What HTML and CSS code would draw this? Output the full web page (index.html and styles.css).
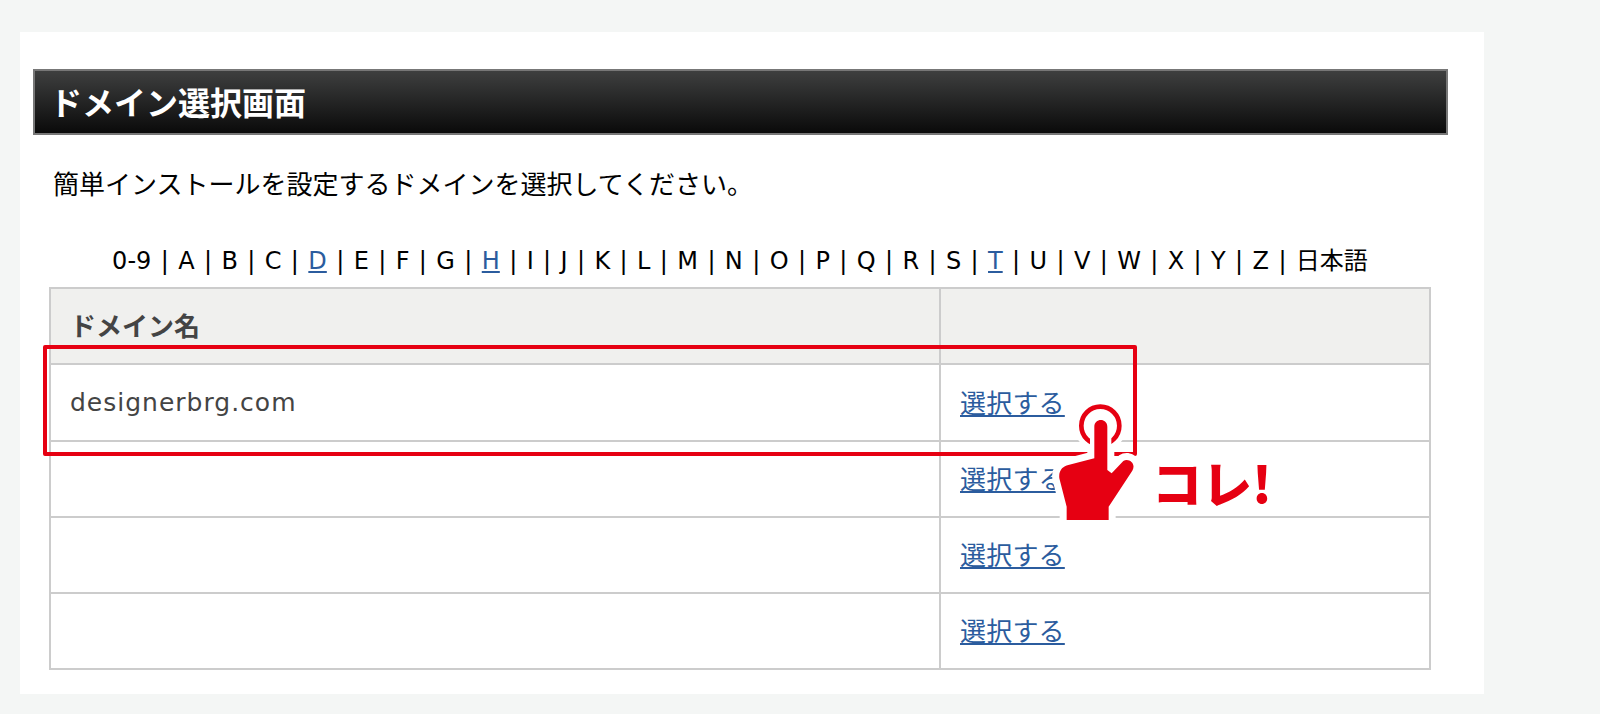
FILE: index.html
```html
<!DOCTYPE html>
<html lang="ja">
<head>
<meta charset="utf-8">
<title>ドメイン選択画面</title>
<link rel="stylesheet" href="styles.css">
</head>
<body>
<main class="panel">
  <h1 class="title">ドメイン選択画面</h1>
  <p class="lead">簡単インストールを設定するドメインを選択してください。</p>
  <div class="content">
    <nav class="index">0-9 | A | B | C | <a href="#">D</a> | E | F | G | <a href="#">H</a> | I | J | K | L | M | N | O | P | Q | R | S | <a href="#">T</a> | U | V | W | X | Y | Z | 日本語</nav>
    <table class="domains">
      <thead>
        <tr><th class="col-name">ドメイン名</th><th class="col-action"></th></tr>
      </thead>
      <tbody>
        <tr><td class="name">designerbrg.com</td><td class="action"><a href="#">選択する</a></td></tr>
        <tr class="short"><td class="name"></td><td class="action"><a href="#">選択する</a></td></tr>
        <tr class="short"><td class="name"></td><td class="action"><a href="#">選択する</a></td></tr>
        <tr class="short"><td class="name"></td><td class="action"><a href="#">選択する</a></td></tr>
      </tbody>
    </table>
  </div>
</main>
<div class="highlight"></div>
<svg class="hand" viewBox="0 0 300 160" width="300" height="160" aria-hidden="true">
  <g transform="scale(0.3333)">
    <circle class="ring-halo" cx="301" cy="137" r="57"/>
    <path class="hand-halo" d="M283 235L283 140C283 113 322 113 322 140L322 270L335 280L370 243C385 232 410 250 397 272L326 380L326 420L200 420L200 380L178 295C175 270 190 258 205 255Z"/>
    <circle class="ring" cx="301" cy="137" r="57"/>
    <path class="finger-halo" d="M302 140L302 280"/>
    <path class="hand-fill" d="M283 235L283 140C283 113 322 113 322 140L322 270L335 280L370 243C385 232 410 250 397 272L326 380L326 420L200 420L200 380L178 295C175 270 190 258 205 255Z"/>
  </g>
</svg>
<div class="callout">コレ!</div>
</body>
</html>
```
FILE: styles.css
```css
html, body { margin: 0; height: 714px; overflow: hidden; }
body {
  background: #f4f6f5;
  padding: 32px 116px 20px 20px;
  box-sizing: border-box;
  font-family: "DejaVu Sans", "Noto Sans CJK JP", sans-serif;
  color: #000;
  position: relative;
}
.panel {
  background: #fff;
  height: 662px;
  padding: 37px 36px 0 13px;
  box-sizing: border-box;
}
.title {
  margin: 0;
  height: 66px;
  box-sizing: border-box;
  border: 2px solid #777;
  background: linear-gradient(#3e3f3f, #0a0a0a);
  color: #fff;
  font-family: "Noto Sans CJK JP", sans-serif;
  font-size: 32px;
  font-weight: 700;
  line-height: 60px;
  padding-left: 15px;
}
.lead {
  margin: 0;
  padding: 32px 0 0 20px;
  font-family: "Noto Sans CJK JP", sans-serif;
  font-size: 26px;
  line-height: 32px;
  height: 32px;
}
.content { padding: 44px 17px 0 16px; }
.index {
  text-align: center;
  font-size: 24px;
  line-height: 36px;
  height: 36px;
  margin-bottom: 8px;
  white-space: nowrap;
  word-spacing: 1.75px;
}
a { color: #2b5c9e; }
.domains {
  width: 1382px;
  table-layout: fixed;
  border-collapse: collapse;
  border: 2px solid #ccc;
  color: #444;
}
.domains th, .domains td {
  border: 2px solid #ccc;
  padding: 0 19px;
  height: 77px;
  text-align: left;
  box-sizing: border-box;
}
.domains .short td { height: 76px; }
.domains th { height: 76px; background: #f0f0ee; font-family: "Noto Sans CJK JP", sans-serif; font-size: 26px; font-weight: 700; padding-bottom: 3px; }
.col-name { width: 890px; }
.domains td { font-family: "Noto Sans CJK JP", sans-serif; font-size: 26px; }
.domains td.action { padding-bottom: 3px; letter-spacing: 0.2px; }
.domains td.name { font-family: "DejaVu Sans", sans-serif; font-size: 25px; letter-spacing: 1px; }
.highlight {
  position: absolute;
  left: 43px;
  top: 345px;
  width: 1094px;
  height: 111px;
  box-sizing: border-box;
  border: 4px solid #e60012;
  border-radius: 2px;
}
.hand { position: absolute; left: 1000px; top: 380px; }
.ring-halo { fill: none; stroke: #fff; stroke-width: 44; }
.hand-halo { fill: #fff; stroke: #fff; stroke-width: 42; stroke-linejoin: round; }
.ring { fill: none; stroke: #e60012; stroke-width: 14; }
.finger-halo { fill: none; stroke: #fff; stroke-width: 64; }
.hand-fill { fill: #e60012; }
.callout {
  position: absolute;
  left: 1152px;
  top: 449px;
  font-family: "Noto Sans CJK JP", sans-serif;
  font-weight: 900;
  font-size: 50px;
  line-height: 64px;
  color: #e60012;
  white-space: nowrap;
}
```
